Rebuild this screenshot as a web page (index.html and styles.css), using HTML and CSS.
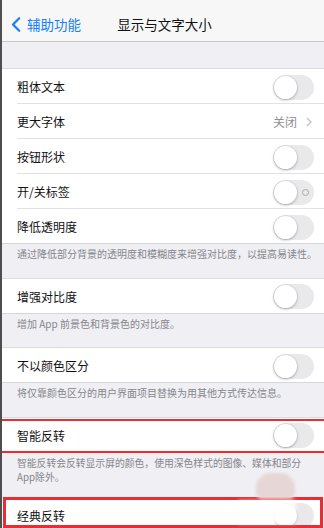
FILE: index.html
```html
<!DOCTYPE html>
<html lang="zh-CN">
<head>
<meta charset="utf-8">
<title>显示与文字大小</title>
<link rel="stylesheet" href="styles.css">
</head>
<body>
<div class="screen">
  <header class="nav">
    <div class="nav-back">
      <svg class="back-chevron" width="10" height="15" viewBox="0 0 10 15"><path d="M8.2 1.2 L2 7.5 L8.2 13.8" fill="none" stroke="#157efb" stroke-width="2.2" stroke-linecap="round" stroke-linejoin="round"/></svg>
      <span>辅助功能</span>
    </div>
    <div class="nav-title">显示与文字大小</div>
    <div></div>
  </header>
  <div class="spacer"></div>

  <section class="group">
    <div class="row"><div class="row-inner"><span class="label">粗体文本</span><span class="switch"><span class="knob"></span></span></div></div>
    <div class="row"><div class="row-inner"><span class="label">更大字体</span><span class="detail">关闭<svg class="chev" width="6" height="10" viewBox="0 0 6 10"><path d="M1 1 L5 5 L1 9" fill="none" stroke="#c2c2c6" stroke-width="1.3"/></svg></span></div></div>
    <div class="row"><div class="row-inner"><span class="label">按钮形状</span><span class="switch"><span class="knob"></span></span></div></div>
    <div class="row"><div class="row-inner"><span class="label">开/关标签</span><span class="switch"><span class="knob"></span><span class="off-mark"></span></span></div></div>
    <div class="row"><div class="row-inner"><span class="label">降低透明度</span><span class="switch"><span class="knob"></span></span></div></div>
  </section>
  <p class="footer">通过降低部分背景的透明度和模糊度来增强对比度，以提高易读性。</p>

  <section class="group">
    <div class="row"><div class="row-inner"><span class="label">增强对比度</span><span class="switch"><span class="knob"></span></span></div></div>
  </section>
  <p class="footer">增加 App 前景色和背景色的对比度。</p>

  <section class="group">
    <div class="row"><div class="row-inner"><span class="label">不以颜色区分</span><span class="switch"><span class="knob"></span></span></div></div>
  </section>
  <p class="footer">将仅靠颜色区分的用户界面项目替换为用其他方式传达信息。</p>

  <section class="group">
    <div class="row"><div class="row-inner"><span class="label">智能反转</span><span class="switch"><span class="knob"></span></span></div></div>
  </section>
  <p class="footer footer-two">智能反转会反转显示屏的颜色，使用深色样式的图像、媒体和部分<br>App除外。</p>

  <section class="group">
    <div class="row"><div class="row-inner"><span class="label">经典反转</span><span class="switch"><span class="knob"></span></span></div></div>
  </section>

  <div class="mark mark-smart"></div>
  <div class="mark mark-classic"></div>
  <div class="blob blob-head"></div>
  <div class="blob blob-veil"></div>
</div>
</body>
</html>
```
FILE: styles.css
```css
html, body {
  margin: 0;
  padding: 0;
  background: #efeff4;
}

body {
  font-family: "Noto Sans CJK SC", "Noto Sans", sans-serif;
  color: #111;
}

.screen {
  position: relative;
  width: 322px;
  height: 528px;
  overflow: hidden;
  border-left: 2px solid #4e4e50;
  background: #efeff4;
}

.nav {
  height: 34px;
  padding-top: 7px;
  display: grid;
  grid-template-columns: 1fr auto 1fr;
  align-items: center;
  background: #f7f7f8;
  border-bottom: 1px solid #c6c6c9;
}

.nav-back {
  display: flex;
  align-items: center;
  gap: 6px;
  padding-left: 9px;
  color: #157efb;
  font-size: 13.5px;
}

.back-chevron {
  display: block;
}

.nav-title {
  font-size: 13.5px;
  color: #111;
  padding-left: 3px;
}

.spacer {
  height: 27px;
}

.group {
  background: #fff;
  border-bottom: 1px solid #d6d6da;
  box-shadow: 0 -1px 0 #dcdce0;
}

.row {
  padding-left: 15px;
}

.row-inner {
  height: 34px;
  display: flex;
  align-items: center;
  justify-content: space-between;
  padding-right: 10px;
  border-bottom: 1px solid #e2e2e6;
}

.row:last-child .row-inner {
  border-bottom: none;
}

.label {
  font-size: 12px;
  line-height: 14px;
  padding-top: 2px;
}

.detail {
  display: flex;
  align-items: center;
  gap: 9px;
  font-size: 12px;
  color: #8e8e93;
  padding-right: 2px;
  padding-top: 1px;
}

.chev {
  display: block;
}

.switch {
  position: relative;
  width: 41px;
  height: 25px;
  border-radius: 13px;
  background: #e9e9eb;
  display: flex;
  align-items: center;
  padding-left: 1px;
  box-sizing: border-box;
  margin-top: 2px;
}

.knob {
  width: 23px;
  height: 23px;
  border-radius: 50%;
  background: #fff;
  box-shadow: 0 1px 3px rgba(0, 0, 0, 0.28), 0 0 0 0.5px rgba(0, 0, 0, 0.06);
}

.off-mark {
  position: absolute;
  right: 5px;
  top: 9px;
  width: 5px;
  height: 5px;
  border: 1px solid #a9a9ad;
  border-radius: 50%;
}

.footer {
  margin: 0;
  padding: 4px 4px 18.5px 15px;
  font-size: 10px;
  line-height: 12px;
  color: #86868b;
}

.footer-two {
  padding-top: 3px;
  padding-bottom: 13px;
  font-size: 9.8px;
  line-height: 14.5px;
}

.mark {
  position: absolute;
  border: 2px solid #ee2b30;
  pointer-events: none;
}

.mark-smart {
  left: 0;
  right: -4px;
  top: 419px;
  height: 30px;
  border-left: none;
  border-right: none;
}

.mark-classic {
  left: 1px;
  top: 497px;
  width: 314px;
  height: 25px;
  border-width: 3px;
}

.blob {
  position: absolute;
  pointer-events: none;
}

.blob-head {
  left: 254px;
  top: 473px;
  width: 39px;
  height: 26px;
  border-radius: 15px 15px 6px 6px;
  background: #e6d6d6;
  filter: blur(1.5px);
}

.blob-veil {
  left: 236px;
  top: 501px;
  width: 58px;
  height: 22px;
  background: rgba(255, 255, 255, 0.9);
  filter: blur(2px);
}
```
